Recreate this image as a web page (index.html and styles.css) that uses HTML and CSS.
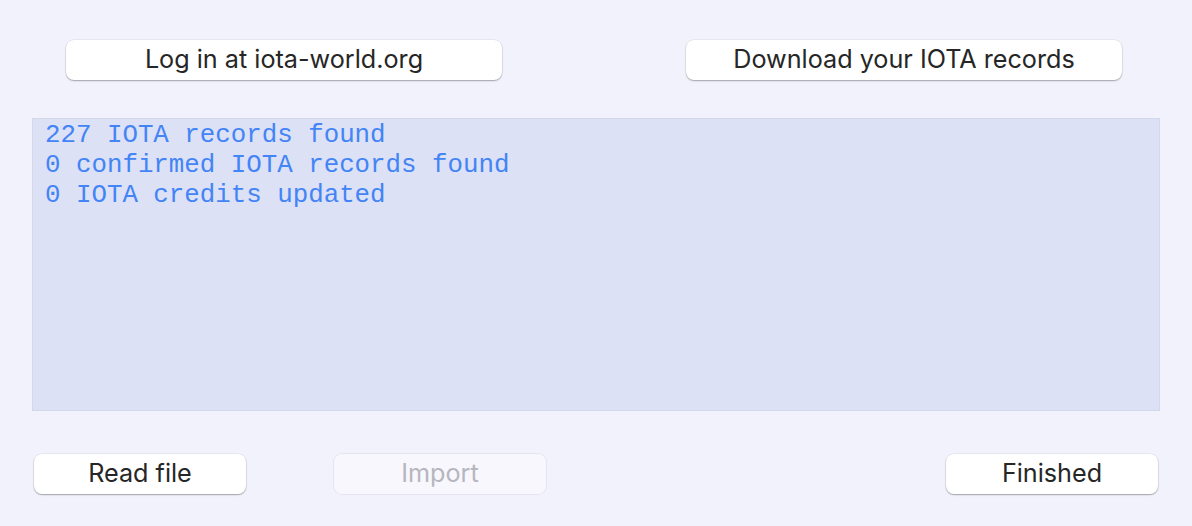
FILE: index.html
```html
<!DOCTYPE html>
<html lang="en">
<head>
    <meta charset="UTF-8">
    <title>IOTA records</title>
    <link rel="stylesheet" href="styles.css">
</head>
<body>
    <div class="window">
        <div class="top-row">
            <button class="btn">Log in at iota-world.org</button>
            <button class="btn">Download your IOTA records</button>
        </div>
        <div class="log">227 IOTA records found
0 confirmed IOTA records found
0 IOTA credits updated</div>
        <div class="bottom-row">
            <button class="btn small">Read file</button>
            <button class="btn small" disabled>Import</button>
            <button class="btn small finish">Finished</button>
        </div>
    </div>
</body>
</html>
```

FILE: styles.css
```css
body {
    margin: 0;
    background-color: #f2f2fc;
    font-family: Inter, "Noto Sans", sans-serif;
}
.window {
    width: 1192px;
    height: 526px;
    padding: 40px 32px 0 32px;
    box-sizing: border-box;
}
.top-row {
    display: flex;
    justify-content: space-between;
    padding: 0 38px 0 34px;
}
.btn {
    font-family: Inter, "Noto Sans", sans-serif;
    font-size: 25.2px;
    color: #262626;
    background-color: #fff;
    border: none;
    border-radius: 8px;
    box-shadow: 0 0 0 0.5px rgba(0, 0, 0, 0.08), 0 1px 1.5px rgba(0, 0, 0, 0.3);
    width: 436px;
    height: 40px;
    padding: 0 0 3px 0;
}
.btn:disabled {
    color: #b6b6be;
    background-color: #f7f7fd;
    box-shadow: 0 0 0 1px rgba(0, 0, 0, 0.05);
}
.log {
    margin-top: 38px;
    height: 293px;
    box-sizing: border-box;
    background-color: #dce1f5;
    border: 1.5px solid #d3d7ea;
    padding: 2px 12px;
    font-family: "Liberation Mono", monospace;
    font-size: 25.8px;
    line-height: 30px;
    color: #4384f6;
    white-space: pre;
}
.bottom-row {
    display: flex;
    gap: 88px;
    margin-top: 43px;
    padding: 0 2px;
}
.btn.small {
    width: 212px;
}
.btn.finish {
    margin-left: auto;
}
```
